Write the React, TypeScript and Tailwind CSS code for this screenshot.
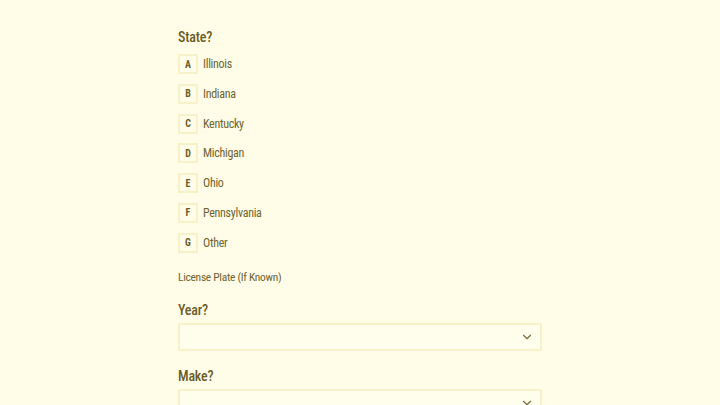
import { ChevronDown } from 'lucide-react'

const STATES = ['Illinois', 'Indiana', 'Kentucky', 'Michigan', 'Ohio', 'Pennsylvania', 'Other']
const LETTERS = ['A', 'B', 'C', 'D', 'E', 'F', 'G']

function SelectBox() {
  return (
    <div className="flex h-[28px] items-center justify-end rounded-[2px] border-2 border-[#f6f1c9] bg-[#fffdeb] pr-[6px]">
      <ChevronDown className="h-[14px] w-[14px] text-[#7a6d3a]" strokeWidth={2} />
    </div>
  )
}

export default function App() {
  return (
    <div
      className="min-h-[405px] w-full overflow-hidden bg-[#fffde8] text-[#6e6431]"
      style={{ fontFamily: '"Roboto Condensed", Roboto, sans-serif' }}
    >
      <div className="mx-auto w-[364px] pt-[27px]">
        <h2 className="text-[14px] font-medium leading-[20px] tracking-[-0.2px] text-[#6b5d28]">State?</h2>

        <div className="mt-[7px] flex flex-col gap-[9.8px]">
          {STATES.map((s, i) => (
            <div key={s} className="flex items-center gap-[5px]">
              <div className="flex h-[20px] w-[20px] items-center justify-center border-2 border-[#f6f1c9] text-[10px] font-bold text-[#6b5d28]">
                {LETTERS[i]}
              </div>
              <span className="text-[12px] leading-[20px] tracking-[-0.3px]">{s}</span>
            </div>
          ))}
        </div>

        <p className="mt-[15px] text-[11.5px] leading-[18px] tracking-[-0.3px]">License Plate (If Known)</p>

        <h2 className="mt-[14px] text-[14px] font-medium leading-[20px] tracking-[-0.2px] text-[#6b5d28]">Year?</h2>
        <div className="mt-[3px]">
          <SelectBox />
        </div>

        <h2 className="mt-[15px] text-[14px] font-medium leading-[20px] tracking-[-0.2px] text-[#6b5d28]">Make?</h2>
        <div className="mt-[3px]">
          <SelectBox />
        </div>
      </div>
    </div>
  )
}
